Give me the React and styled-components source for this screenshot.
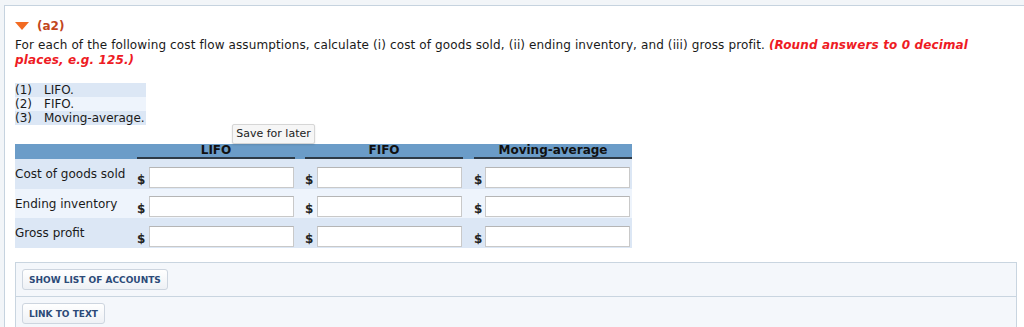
import React from "react";
import styled, { createGlobalStyle } from "styled-components";

const Global = createGlobalStyle`
  html, body { margin: 0; padding: 0; }
  body {
    background: #f2f5f8;
    font-family: "DejaVu Sans", Verdana, sans-serif;
    color: #1a1a1a;
    width: 1024px;
    height: 327px;
    overflow: hidden;
  }
`;

const Panel = styled.div`
  position: relative;
  margin: 5px 0 0 4px;
  border-top: 1px solid #c6d3df;
  border-left: 1px solid #c6d3df;
  background: #fff;
  padding: 12px 0 20px 10px;
  min-height: 340px;
`;

const PartHeader = styled.div`
  display: flex;
  align-items: center;
  gap: 8px;
  height: 15px;
  margin-bottom: 5px;
  font-size: 12px;
  font-weight: bold;
  color: #c2461c;
`;

const Caret = styled.span`
  width: 0;
  height: 0;
  border-left: 7px solid transparent;
  border-right: 7px solid transparent;
  border-top: 8px solid #f26b22;
`;

const Instructions = styled.p`
  margin: 0;
  width: 960px;
  font-size: 12px;
  line-height: 15px;
  letter-spacing: 0.12px;
`;

const Hint = styled.span`
  color: #ee1b24;
  font-weight: bold;
  font-style: italic;
`;

const Options = styled.div`
  margin-top: 15px;
  width: 131px;
  display: flex;
  flex-direction: column;
`;

const Option = styled.div`
  height: 14px;
  line-height: 14px;
  font-size: 12px;
  background: ${(p) => (p.$alt ? "#eef4fc" : "#dce7f5")};
  white-space: nowrap;
  & > b { display: inline-block; width: 29px; font-weight: normal; }
`;

const Tooltip = styled.div`
  position: absolute;
  left: 227px;
  top: 118px;
  width: 81px;
  height: 18px;
  background: #f6f6f6;
  border: 1px solid #d6d6d6;
  border-radius: 2px;
  box-shadow: 0 1px 2px rgba(0,0,0,0.12);
  font-size: 11px;
  line-height: 18px;
  text-align: center;
  color: #222;
  z-index: 2;
`;

const Table = styled.div`
  margin-top: 19px;
  width: 617px;
`;

const HeadRow = styled.div`
  display: grid;
  grid-template-columns: 122px 168px 169px 158px;
  height: 15px;
  background: #6b9cc8;
`;

const HeadCell = styled.div`
  padding-right: ${(p) => p.$gap || 0}px;
  & > span {
    display: block;
    height: 13px;
    border-bottom: 2px solid #2d3a47;
    font-size: 12px;
    font-weight: bold;
    line-height: 13px;
    text-align: center;
    color: #111;
  }
`;

const Row = styled.div`
  display: grid;
  grid-template-columns: 122px 168px 169px 158px;
  height: ${(p) => p.$h}px;
  background: ${(p) => (p.$alt ? "#eef4fc" : "#dce7f5")};
`;

const Label = styled.div`
  font-size: 12px;
  line-height: 14px;
  padding-top: ${(p) => p.$pt}px;
  white-space: nowrap;
`;

const Cell = styled.div`
  display: flex;
  align-items: flex-end;
  padding-bottom: ${(p) => p.$pb}px;
  padding-right: ${(p) => p.$gap || 0}px;
`;

const Dollar = styled.span`
  width: ${(p) => p.$w}px;
  font-size: 12px;
  font-weight: bold;
  line-height: 14px;
  padding-bottom: 1px;
  color: #222;
`;

const Input = styled.input`
  box-sizing: border-box;
  width: ${(p) => p.$w}px;
  height: 21px;
  margin: 0;
  border: 1px solid #c9c9c9;
  border-top-color: #b5b5b5;
  background: #fff;
  padding: 0 4px;
  outline: none;
`;

const Tools = styled.div`
  margin-top: 14px;
  width: 1000px;
  border: 1px solid #c9d5e0;
  background: #f4f7fb;
`;

const ToolRow = styled.div`
  display: flex;
  padding: 6px;
  & + & { border-top: 1px solid #c9d5e0; }
`;

const ToolButton = styled.button`
  height: 21px;
  margin: 0;
  padding: 0 6px;
  border: 1px solid #cdd5df;
  border-radius: 3px;
  background: linear-gradient(#ffffff, #eef1f5);
  font-family: "DejaVu Sans", Verdana, sans-serif;
  font-size: 9px;
  font-weight: bold;
  color: #2c4a78;
`;

const rows = [
  { label: "Cost of goods sold", h: 30, pt: 8, alt: false },
  { label: "Ending inventory", h: 29, pt: 8, alt: true },
  { label: "Gross profit", h: 30, pt: 8, alt: false },
];

export default function App() {
  return (
    <>
      <Global />
      <Panel>
        <PartHeader>
          <Caret />
          (a2)
        </PartHeader>
        <Instructions>
          For each of the following cost flow assumptions, calculate (i) cost of goods sold, (ii) ending inventory, and (iii) gross profit.{" "}
          <Hint>(Round answers to 0 decimal places, e.g. 125.)</Hint>
        </Instructions>
        <Options>
          <Option><b>(1)</b>LIFO.</Option>
          <Option $alt><b>(2)</b>FIFO.</Option>
          <Option><b>(3)</b>Moving-average.</Option>
        </Options>
        <Tooltip>Save for later</Tooltip>
        <Table>
          <HeadRow>
            <div />
            <HeadCell $gap={10}><span>LIFO</span></HeadCell>
            <HeadCell $gap={11}><span>FIFO</span></HeadCell>
            <HeadCell><span>Moving-average</span></HeadCell>
          </HeadRow>
          {rows.map((r) => (
            <Row key={r.label} $h={r.h} $alt={r.alt}>
              <Label $pt={r.pt}>{r.label}</Label>
              <Cell $pb={1} $gap={10}>
                <Dollar $w={12}>$</Dollar>
                <Input $w={145} />
              </Cell>
              <Cell $pb={1} $gap={10}>
                <Dollar $w={12}>$</Dollar>
                <Input $w={145} />
              </Cell>
              <Cell $pb={1}>
                <Dollar $w={11}>$</Dollar>
                <Input $w={145} />
              </Cell>
            </Row>
          ))}
        </Table>
        <Tools>
          <ToolRow><ToolButton>SHOW LIST OF ACCOUNTS</ToolButton></ToolRow>
          <ToolRow><ToolButton>LINK TO TEXT</ToolButton></ToolRow>
        </Tools>
      </Panel>
    </>
  );
}
